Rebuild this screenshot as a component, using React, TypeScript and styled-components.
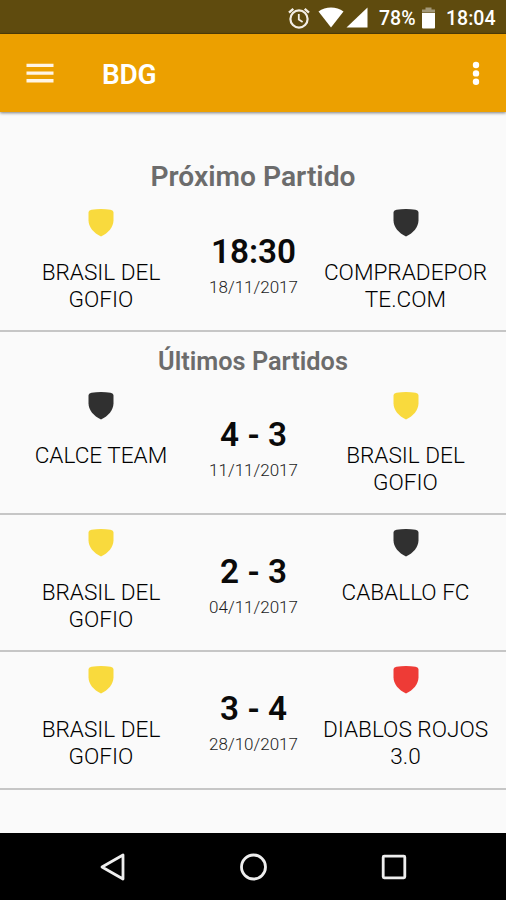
import React from "react";
import styled, { createGlobalStyle } from "styled-components";

const GlobalStyle = createGlobalStyle`
  * { box-sizing: border-box; }
  body { margin: 0; background: #fafafa; font-family: Roboto, "Liberation Sans", sans-serif; }
`;

const Screen = styled.div`
  width: 506px;
  height: 900px;
  display: flex;
  flex-direction: column;
  overflow: hidden;
  background: #fafafa;
`;

const StatusBar = styled.header`
  height: 34px;
  flex: none;
  display: flex;
  align-items: center;
  justify-content: flex-end;
  padding: 2px 11px 0 0;
  background: #5f4b0e;
  border-bottom: 1px solid #513f08;
  color: #fff;
  font-size: 19.5px;
  font-weight: 500;
  line-height: 30px;
`;

const StatusIcon = styled.svg<{ $gap: number }>`
  flex: none;
  display: block;
  margin-right: ${(p) => p.$gap}px;
`;

const StatusText = styled.span<{ $width: number; $gap?: number }>`
  width: ${(p) => p.$width}px;
  margin: 2px ${(p) => p.$gap ?? 0}px 0 0;
  white-space: nowrap;
`;

const AppBar = styled.div`
  height: 78px;
  flex: none;
  display: flex;
  align-items: center;
  padding: 0 20px 0 26px;
  background: #eca000;
  box-shadow: 0 1px 3px rgba(0, 0, 0, 0.5);
`;

const AppTitle = styled.h1`
  flex: 1;
  margin: 3px 0 0 48px;
  color: #fff;
  font-size: 28px;
  font-weight: 600;
  line-height: 36px;
  letter-spacing: -0.3px;
`;

const Content = styled.main`
  flex: 1;
  padding-top: 46px;
`;

const Section = styled.section``;

const Heading = styled.h2<{ $small?: boolean }>`
  margin: 0;
  height: ${(p) => (p.$small ? 60 : 51)}px;
  padding-top: ${(p) => (p.$small ? 13 : 2)}px;
  text-align: center;
  color: #6c6c6c;
  font-size: ${(p) => (p.$small ? 25.3 : 28.2)}px;
  font-weight: 600;
  line-height: 34px;
`;

const MatchRow = styled.article<{ $lead?: number }>`
  height: ${(p) => 123.15 + (p.$lead ?? 0)}px;
  padding-top: ${(p) => p.$lead ?? 0}px;
  display: grid;
  grid-template-columns: 202px 103px 201px;
  border-bottom: 2px solid #c6c6c6;
`;

const Team = styled.div`
  display: flex;
  flex-direction: column;
  align-items: center;
  padding: 0 14px;
`;

const TeamName = styled.div`
  width: 100%;
  margin-top: 23px;
  text-align: center;
  overflow-wrap: anywhere;
  color: #000;
  font-size: 22.6px;
  font-weight: 300;
  line-height: 26.7px;
`;

const Result = styled.div`
  display: flex;
  flex-direction: column;
  align-items: center;
  white-space: nowrap;
`;

const Score = styled.strong`
  margin-top: 23px;
  color: #0a0a0a;
  font-size: 33.3px;
  font-weight: 600;
  line-height: 40px;
`;

const PlayedOn = styled.time`
  margin-top: 4px;
  color: #1c1c1c;
  font-size: 17px;
  font-weight: 300;
  line-height: 22px;
`;

const NavBar = styled.nav`
  height: 67px;
  flex: none;
  display: grid;
  grid-template-columns: repeat(3, 141px);
  justify-content: center;
  justify-items: center;
  align-items: center;
  background: #000;
`;

const Shield = ({ color }: { color: string }) => (
  <svg width="26" height="28" viewBox="0 0 26 28">
    <path
      fill={color}
      d="M3.500.7C9.500-.1 16.500-.1 22.500.7Q25.500 1.200 25.500 3.700V11.500C25.300 18 20.500 24 13 27.500C5.500 24 .7 18 .5 11.500V3.700Q.5 1.200 3.500.7Z"
    />
  </svg>
);

const YELLOW = "#f9da3d";
const BLACK = "#303030";
const RED = "#ee3b36";

type Side = { name: string; color: string };
type MatchInfo = { home: Side; away: Side; score: string; date: string };

const brasil: Side = { name: "BRASIL DEL GOFIO", color: YELLOW };

const nextMatch: MatchInfo = {
  home: brasil,
  away: { name: "COMPRADEPORTE.COM", color: BLACK },
  score: "18:30",
  date: "18/11/2017",
};

const lastMatches: MatchInfo[] = [
  { home: { name: "CALCE TEAM", color: BLACK }, away: brasil, score: "4 - 3", date: "11/11/2017" },
  { home: brasil, away: { name: "CABALLO FC", color: BLACK }, score: "2 - 3", date: "04/11/2017" },
  { home: brasil, away: { name: "DIABLOS ROJOS 3.0", color: RED }, score: "3 - 4", date: "28/10/2017" },
];

const TeamSide = ({ side }: { side: Side }) => (
  <Team>
    <Shield color={side.color} />
    <TeamName>{side.name}</TeamName>
  </Team>
);

const Match = ({ match, lead }: { match: MatchInfo; lead?: number }) => (
  <MatchRow $lead={lead}>
    <TeamSide side={match.home} />
    <Result>
      <Score>{match.score}</Score>
      <PlayedOn>{match.date}</PlayedOn>
    </Result>
    <TeamSide side={match.away} />
  </MatchRow>
);

export default function App() {
  return (
    <Screen>
      <GlobalStyle />
      <StatusBar>
        <StatusIcon $gap={8} width="22" height="22" viewBox="0 0 22 22" fill="none" stroke="#f4efe6">
          <circle cx="11" cy="12" r="8.600" strokeWidth="2.200" />
          <path d="M10.800 7v5.500l3.800 2.400" strokeWidth="1.800" />
          <path d="M1 5.600l4.300-3.700M21 5.600l-4.300-3.700" strokeWidth="2.400" />
        </StatusIcon>
        <StatusIcon $gap={2} width="26" height="21" viewBox="0 0 26 21" fill="#fff">
          <path d="M.5 4.500C7.500-1 18.500-1 25.500 4.500L13 20.500Z" />
        </StatusIcon>
        <StatusIcon $gap={11} width="22" height="21" viewBox="0 0 22 21" fill="#fff">
          <path d="M.5 20.500L21.500.5V20.500Z" />
        </StatusIcon>
        <StatusText $width={37} $gap={5}>78%</StatusText>
        <StatusIcon $gap={10} width="15" height="22" viewBox="0 0 15 22">
          <path fill="#a39878" d="M4.500.5h6v2h3.500v3h-13v-3h3.500z" />
          <path fill="#fff" d="M1 6h13v14.500q0 1-1 1h-11q-1 0-1-1z" />
        </StatusIcon>
        <StatusText $width={49}>18:04</StatusText>
      </StatusBar>
      <AppBar>
        <svg width="28" height="20" viewBox="0 0 28 20" fill="#fff5e6">
          <path d="M.5.700h27v3.400h-27zM.5 8.400h27v3.400h-27zM.5 16.100h27v3.400h-27z" />
        </svg>
        <AppTitle>BDG</AppTitle>
        <svg width="20" height="26" viewBox="0 0 20 26" fill="#fff">
          <circle cx="10" cy="5" r="3.200" />
          <circle cx="10" cy="13.400" r="3.200" />
          <circle cx="10" cy="21.800" r="3.200" />
        </svg>
      </AppBar>
      <Content>
        <Section>
          <Heading>Próximo Partido</Heading>
          <Match match={nextMatch} />
        </Section>
        <Section>
          <Heading $small>Últimos Partidos</Heading>
          {lastMatches.map((m, i) => (
            <Match key={m.date} match={m} lead={i === 0 ? 0 : 14} />
          ))}
        </Section>
      </Content>
      <NavBar>
        <svg width="28" height="30" viewBox="0 0 28 30" fill="none" stroke="#eee" strokeWidth="2.800">
          <path strokeLinejoin="round" d="M25 3V27L4 15Z" />
        </svg>
        <svg width="30" height="30" viewBox="0 0 30 30" fill="none" stroke="#eee" strokeWidth="2.800">
          <circle cx="15.500" cy="15" r="12" />
        </svg>
        <svg width="28" height="28" viewBox="0 0 28 28" fill="none" stroke="#eee" strokeWidth="2.800">
          <rect x="3.200" y="3.200" width="21.600" height="21.600" rx="1" />
        </svg>
      </NavBar>
    </Screen>
  );
}
